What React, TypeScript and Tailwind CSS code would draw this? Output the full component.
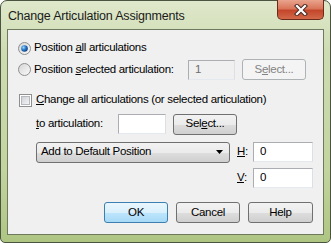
import React from 'react';

const font = "font-['Liberation_Sans','Arimo',sans-serif]";

const Radio = ({ checked }: { checked?: boolean }) => (
  <svg width="13" height="13" viewBox="0 0 13 13" className="shrink-0">
    <defs>
      <linearGradient id="rbg" x1="0" y1="0" x2="1" y2="1">
        <stop offset="0" stopColor="#d4d4d4" />
        <stop offset="1" stopColor="#fbfbfb" />
      </linearGradient>
      <radialGradient id="rdot" cx="0.35" cy="0.35" r="0.7">
        <stop offset="0" stopColor="#9fd8ff" />
        <stop offset="0.5" stopColor="#2a7bc8" />
        <stop offset="1" stopColor="#0f3f7a" />
      </radialGradient>
    </defs>
    <circle cx="6.5" cy="6.5" r="6" fill="url(#rbg)" stroke="#8f8f8f" />
    {checked && <circle cx="6.5" cy="6.5" r="3.3" fill="url(#rdot)" />}
  </svg>
);

const Checkbox = () => (
  <svg width="13" height="13" viewBox="0 0 13 13" className="shrink-0">
    <defs>
      <linearGradient id="cbg" x1="0" y1="0" x2="1" y2="1">
        <stop offset="0" stopColor="#cbcfd5" />
        <stop offset="1" stopColor="#f7f7f7" />
      </linearGradient>
    </defs>
    <rect x="0.5" y="0.5" width="12" height="12" fill="#fff" stroke="#8f8f8f" />
    <rect x="2.5" y="2.5" width="8" height="8" fill="url(#cbg)" stroke="#b5b8bd" />
  </svg>
);

const Btn = ({ children, w, disabled, primary }: { children: React.ReactNode; w: string; disabled?: boolean; primary?: boolean }) => {
  const cls = disabled
    ? 'border-[#adb2b5] bg-[#f4f4f4] text-[#838383]'
    : primary
    ? 'border-[#3c7fb1] bg-[linear-gradient(#eaf6fd_0%,#d9f0fc_50%,#bee6fd_51%,#a7d9f5_100%)] text-black'
    : 'border-[#707070] bg-[linear-gradient(#f2f2f2_0%,#ebebeb_50%,#dddddd_51%,#cfcfcf_100%)] text-black';
  return (
    <div className={`${w} h-[21px] shrink-0 rounded-[3px] border flex items-center justify-center ${cls}`}>
      {children}
    </div>
  );
};

const Field = ({ w, value, disabled }: { w: string; value?: string; disabled?: boolean }) => (
  <div
    className={`${w} h-[20px] shrink-0 border border-[#abadb3] border-b-[#e3e9ef] border-r-[#dbdfe6] flex items-center pl-[6px] ${
      disabled ? 'bg-[#f0f0f0] text-[#6d6d6d]' : 'bg-white text-black'
    }`}
  >
    {value}
  </div>
);

export default function App() {
  return (
    <div className={`${font} text-[11.5px] tracking-[-0.3px] leading-none w-[331px] h-[243px] relative whitespace-nowrap`}>
      <div className="w-full h-full rounded-t-[7px] rounded-b-[5px] border border-[#4a5440] bg-[linear-gradient(#dfe8cb_0%,#cfdcb3_20%,#c3d49f_70%,#aec582_100%)] flex flex-col">
        {/* title bar */}
        <div className="h-[28px] flex items-start relative">
          <span className="ml-[7px] mt-[9px] text-[12.5px] tracking-[-0.2px] text-[#1a1a1a]">Change Articulation Assignments</span>
          <div className="absolute right-[6px] top-[-1px] w-[47px] h-[20px] rounded-b-[5px] border border-[#6b2a1a] border-t-0 bg-[linear-gradient(#e9a48d_0%,#d9765a_45%,#c4462a_55%,#d2694a_100%)] flex items-center justify-center">
            <svg width="14" height="12" viewBox="0 0 14 12">
              <path d="M3 2 L11 10 M11 2 L3 10" stroke="#4a2a22" strokeWidth="4.2" strokeLinecap="square" />
              <path d="M3 2 L11 10 M11 2 L3 10" stroke="#ffffff" strokeWidth="2.2" strokeLinecap="square" />
            </svg>
          </div>
        </div>
        {/* client */}
        <div className="mx-[6px] h-[206px] border border-[#6d7a5e] bg-[#f0f0f0] flex flex-col text-black">
          <div className="h-[8px]" />
          <div className="h-[20px] flex items-center pl-[10px] gap-[3px]">
            <Radio checked />
            <span>
              Position <u>a</u>ll articulations
            </span>
          </div>
          <div className="mt-[1px] h-[21px] flex items-center pl-[10px] gap-[3px]">
            <Radio />
            <span>
              Position <u>s</u>elected articulation:
            </span>
            <div className="ml-auto flex items-center">
              <Field w="w-[47px]" value="1" disabled />
              <div className="ml-[7px] mr-[17px]">
                <Btn w="w-[64px]" disabled>
                  S<u>e</u>lect...
                </Btn>
              </div>
            </div>
          </div>
          <div className="mt-[10px] h-[20px] flex items-center pl-[11px] gap-[4px]">
            <Checkbox />
            <span>
              <u>C</u>hange all articulations (or selected articulation)
            </span>
          </div>
          <div className="mt-[4px] h-[20px] flex items-center pl-[28px]">
            <span className="w-[82px]">
              <u>t</u>o articulation:
            </span>
            <Field w="w-[48px]" />
            <div className="ml-[7px]">
              <Btn w="w-[64px]">
                Sel<u>e</u>ct...
              </Btn>
            </div>
          </div>
          <div className="mt-[8px] h-[20px] flex items-center pl-[28px]">
            <div className="w-[194px] h-[21px] rounded-[3px] border border-[#707070] bg-[linear-gradient(#f2f2f2_0%,#ebebeb_50%,#dddddd_51%,#cfcfcf_100%)] flex items-center pl-[4px] pr-[6px]">
              <span className="flex-1">Add to Default Position</span>
              <svg width="7" height="4" viewBox="0 0 7 4">
                <path d="M0 0 H7 L3.5 4 Z" fill="#000" />
              </svg>
            </div>
            <span className="ml-[7px] w-[16px]">
              <u>H</u>:
            </span>
            <Field w="w-[60px]" value="0" />
          </div>
          <div className="mt-[6px] h-[20px] flex items-center pl-[229px]">
            <span className="w-[16px]">
              <u>V</u>:
            </span>
            <Field w="w-[60px]" value="0" />
          </div>
          <div className="mt-[14px] flex items-center justify-end pr-[10px] gap-[8px]">
            <Btn w="w-[64px]" primary>
              OK
            </Btn>
            <Btn w="w-[64px]">Cancel</Btn>
            <Btn w="w-[65px]">Help</Btn>
          </div>
        </div>
      </div>
    </div>
  );
}
